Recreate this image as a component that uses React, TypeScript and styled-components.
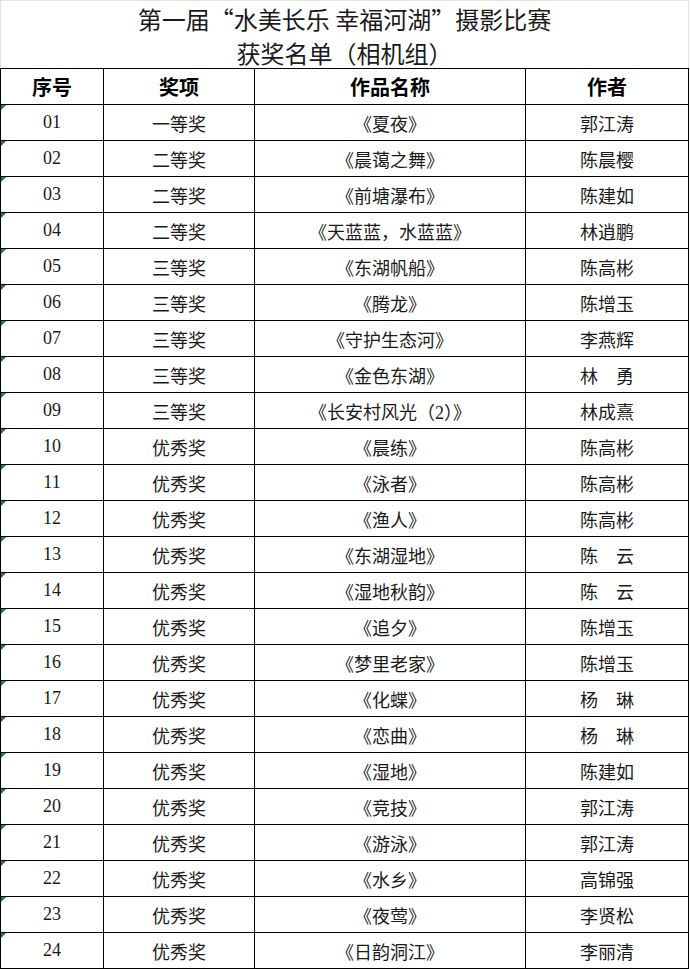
import { createGlobalStyle } from "styled-components";
import styled from "styled-components";

type AwardRow = {
  no: string;
  award: string;
  title: string;
  author: string;
};

const rows: AwardRow[] = [
  { no: "01", award: "一等奖", title: "《夏夜》", author: "郭江涛" },
  { no: "02", award: "二等奖", title: "《晨蔼之舞》", author: "陈晨樱" },
  { no: "03", award: "二等奖", title: "《前塘瀑布》", author: "陈建如" },
  { no: "04", award: "二等奖", title: "《天蓝蓝，水蓝蓝》", author: "林逍鹏" },
  { no: "05", award: "三等奖", title: "《东湖帆船》", author: "陈高彬" },
  { no: "06", award: "三等奖", title: "《腾龙》", author: "陈增玉" },
  { no: "07", award: "三等奖", title: "《守护生态河》", author: "李燕辉" },
  { no: "08", award: "三等奖", title: "《金色东湖》", author: "林\u3000勇" },
  { no: "09", award: "三等奖", title: "《长安村风光（2）》", author: "林成熹" },
  { no: "10", award: "优秀奖", title: "《晨练》", author: "陈高彬" },
  { no: "11", award: "优秀奖", title: "《泳者》", author: "陈高彬" },
  { no: "12", award: "优秀奖", title: "《渔人》", author: "陈高彬" },
  { no: "13", award: "优秀奖", title: "《东湖湿地》", author: "陈\u3000云" },
  { no: "14", award: "优秀奖", title: "《湿地秋韵》", author: "陈\u3000云" },
  { no: "15", award: "优秀奖", title: "《追夕》", author: "陈增玉" },
  { no: "16", award: "优秀奖", title: "《梦里老家》", author: "陈增玉" },
  { no: "17", award: "优秀奖", title: "《化蝶》", author: "杨\u3000琳" },
  { no: "18", award: "优秀奖", title: "《恋曲》", author: "杨\u3000琳" },
  { no: "19", award: "优秀奖", title: "《湿地》", author: "陈建如" },
  { no: "20", award: "优秀奖", title: "《竞技》", author: "郭江涛" },
  { no: "21", award: "优秀奖", title: "《游泳》", author: "郭江涛" },
  { no: "22", award: "优秀奖", title: "《水乡》", author: "高锦强" },
  { no: "23", award: "优秀奖", title: "《夜莺》", author: "李贤松" },
  { no: "24", award: "优秀奖", title: "《日韵洞江》", author: "李丽清" },
];

const headers = ["序号", "奖项", "作品名称", "作者"];

const App = () => {
  return (
    <>
      <GlobalStyle />
      <Sheet>
        <TitleBlock>
          <TitleLine>
            第一届<Quote $side="open">“</Quote>水美长乐 幸福河湖
            <Quote $side="close">”</Quote>摄影比赛
          </TitleLine>
          <TitleLine>获奖名单（相机组）</TitleLine>
        </TitleBlock>
        <Grid>
          {headers.map((h) => (
            <HeadCell key={h}>{h}</HeadCell>
          ))}
          {rows.map((row) => (
            <Row key={row.no}>
              <Cell $marked>{row.no}</Cell>
              <Cell>{row.award}</Cell>
              <Cell>{row.title}</Cell>
              <Cell>{row.author}</Cell>
            </Row>
          ))}
        </Grid>
      </Sheet>
    </>
  );
};

export default App;

const GlobalStyle = createGlobalStyle`
  body {
    margin: 0;
    background: #ffffff;
    font-family: "Liberation Serif", "Noto Sans CJK SC", serif;
    color: #111111;
  }
`;

const Sheet = styled.div`
  width: 689px;
  display: flex;
  flex-direction: column;
`;

const TitleBlock = styled.div`
  box-sizing: border-box;
  height: 68px;
  padding-top: 1px;
  border: 1px solid #e2e2e2;
  border-bottom: none;
  display: flex;
  flex-direction: column;
  align-items: center;
  font-family: "Noto Sans CJK SC", sans-serif;
  font-size: 24px;
  color: #1a1a1a;
`;

const TitleLine = styled.div`
  height: 34px;
  line-height: 34px;
  white-space: nowrap;
`;

// full-width curly quotes, as the sheet's CJK font sets them
const Quote = styled.span<{ $side: "open" | "close" }>`
  display: inline-block;
  width: 1em;
  text-align: ${(p) => (p.$side === "open" ? "right" : "left")};
`;

const Grid = styled.div`
  display: grid;
  grid-template-columns: 103px 151px 271px 163px;
  grid-auto-rows: 36px;
  border-top: 1px solid #000;
  border-left: 1px solid #000;
`;

const Row = styled.div`
  display: contents;
`;

const HeadCell = styled.div`
  box-sizing: border-box;
  display: flex;
  align-items: center;
  justify-content: center;
  border-right: 1px solid #000;
  border-bottom: 1px solid #000;
  font-family: "Noto Sans CJK SC", sans-serif;
  font-size: 20px;
  font-weight: 700;
  color: #000;
`;

const Cell = styled.div<{ $marked?: boolean }>`
  box-sizing: border-box;
  position: relative;
  display: flex;
  align-items: center;
  justify-content: center;
  border-right: 1px solid #000;
  border-bottom: 1px solid #000;
  font-size: 18px;
  color: #1a1a1a;
  white-space: nowrap;

  &::before {
    content: "";
    display: ${(p) => (p.$marked ? "block" : "none")};
    position: absolute;
    top: 0;
    left: 0;
    border-top: 5px solid #1f7a1f;
    border-right: 5px solid transparent;
  }
`;
